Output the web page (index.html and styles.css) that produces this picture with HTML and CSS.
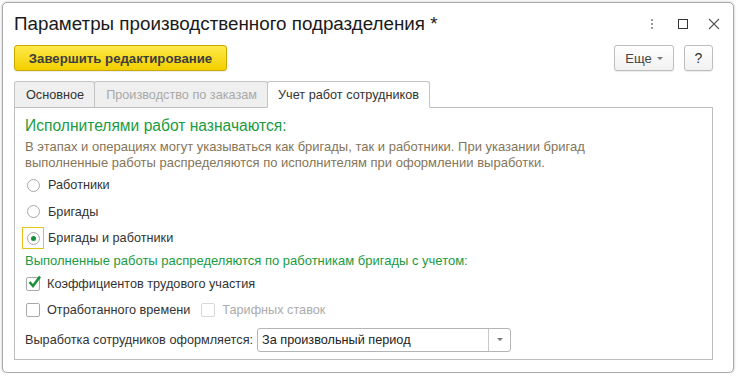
FILE: index.html
```html
<!DOCTYPE html>
<html lang="ru">
<head>
<meta charset="utf-8">
<title>Параметры производственного подразделения</title>
<link rel="stylesheet" href="styles.css">
</head>
<body>
<div class="window">
  <div class="titlebar">
    <div class="title">Параметры производственного подразделения *</div>
    <div class="controls">
      <svg class="ctl" width="20" height="20" viewBox="0 0 20 20"><g fill="#9a9a9a"><rect x="9" y="5" width="2" height="2"/><rect x="9" y="9" width="2" height="2"/><rect x="9" y="13" width="2" height="2"/></g></svg>
      <svg class="ctl" width="20" height="20" viewBox="0 0 20 20"><rect x="5.5" y="5.5" width="9" height="9" fill="none" stroke="#333" stroke-width="1"/></svg>
      <svg class="ctl" width="20" height="20" viewBox="0 0 20 20"><path d="M5 5L15 15M15 5L5 15" stroke="#555" stroke-width="1.1" fill="none"/></svg>
    </div>
  </div>
  <div class="toolbar">
    <button class="btn primary">Завершить редактирование</button>
    <div class="spacer"></div>
    <button class="btn more">Еще <span class="caret"></span></button>
    <button class="btn help">?</button>
  </div>
  <div class="tabs">
    <div class="tab">Основное</div>
    <div class="tab disabled">Производство по заказам</div>
    <div class="tab active">Учет работ сотрудников</div>
  </div>
  <div class="panel">
    <div class="heading">Исполнителями работ назначаются:</div>
    <div class="desc">В этапах и операциях могут указываться как бригады, так и работники. При указании бригад<br>выполненные работы распределяются по исполнителям при оформлении выработки.</div>
    <div class="radios">
      <div class="row"><span class="focus"><span class="radio"></span></span><span class="label">Работники</span></div>
      <div class="row"><span class="focus"><span class="radio"></span></span><span class="label">Бригады</span></div>
      <div class="row"><span class="focus on"><span class="radio checked"></span></span><span class="label">Бригады и работники</span></div>
    </div>
    <div class="subheading">Выполненные работы распределяются по работникам бригады с учетом:</div>
    <div class="checks">
      <div class="row"><span class="check checked"><svg width="15" height="15" viewBox="0 0 15 15"><path d="M2.5 7L6 11L13 1.5" stroke="#1a9139" stroke-width="2.6" fill="none"/></svg></span><span class="label">Коэффициентов трудового участия</span></div>
      <div class="row"><span class="check"></span><span class="label">Отработанного времени</span><span class="check disabled"></span><span class="label muted">Тарифных ставок</span></div>
    </div>
    <div class="field-row">
      <span class="field-label">Выработка сотрудников оформляется:</span>
      <div class="select"><span class="value">За произвольный период</span><span class="dd"><span class="caret"></span></span></div>
    </div>
  </div>
</div>
</body>
</html>
```
FILE: styles.css
```css
* { box-sizing: border-box; }
html, body { margin: 0; padding: 0; background: #ffffff; }
body {
  font-family: "Liberation Sans", Arial, sans-serif;
  font-size: 12.7px;
  color: #333;
  padding: 2px 0 0 2px;
}
.window {
  width: 732px;
  height: 371px;
  border: 1px solid #a9a9a9;
  border-radius: 5px;
  box-shadow: 0 0 3px rgba(0,0,0,0.25);
  background: #fff;
  padding: 0 20px 0 11px;
  display: flex;
  flex-direction: column;
}
.titlebar {
  display: flex;
  align-items: center;
  height: 39px;
  padding-top: 2px;
}
.title {
  font-size: 18.8px;
  color: #1a1a1a;
  flex: 1;
}
.controls {
  display: flex;
  gap: 11px;
  margin-right: -11px;
}
.ctl { display: block; }
.toolbar {
  display: flex;
  align-items: center;
  height: 26px;
  margin-top: 3px;
}
.spacer { flex: 1; }
.btn {
  font-family: inherit;
  height: 26px;
  border-radius: 3px;
  border: 1px solid #bdbdbd;
  background: linear-gradient(#ffffff, #f1f1f1);
  color: #444;
  font-size: 13px;
  padding: 0 10px;
  display: flex;
  align-items: center;
  box-shadow: 0 1px 1px rgba(0,0,0,0.08);
}
.btn.primary {
  width: 213px;
  justify-content: center;
  font-weight: bold;
  color: #3d3d3d;
  border-color: #c9a800;
  background: linear-gradient(#ffe94a, #f3cf00);
  font-size: 13.2px;
}
.btn.more { width: 60px; justify-content: center; gap: 5px; padding: 0; }
.btn.help { width: 29px; margin-left: 10px; justify-content: center; padding: 0; font-size: 14px; color: #333; }
.caret {
  display: inline-block;
  width: 0; height: 0;
  border-left: 3px solid transparent;
  border-right: 3px solid transparent;
  border-top: 3px solid #777;
}
.tabs {
  display: flex;
  margin-top: 10px;
  height: 27px;
  align-items: flex-end;
  position: relative;
  z-index: 1;
  margin-bottom: -1px;
}
.tab {
  height: 27px;
  padding: 0 10px 0 11px;
  display: flex;
  align-items: center;
  background: #efefef;
  border: 1px solid #c4c4c4;
  border-bottom: 1px solid #bdbdbd;
  border-radius: 3px 3px 0 0;
  color: #333;
  margin-right: -1px;
}
.tab.disabled { color: #a9a9a9; }
.tab.active {
  background: #fff;
  border-bottom-color: #fff;
  height: 27px;
  padding: 0 10px 0 10px;
  margin-top: -1px;
}
.panel {
  border: 1px solid #bdbdbd;
  height: 253px;
  padding: 8px 10px 0 10px;
}
.heading {
  color: #1a9b3f;
  font-size: 15.6px;
  line-height: 20px;
}
.desc {
  color: #857559;
  font-size: 13px;
  line-height: 16px;
  margin-top: 3px;
}
.radios { margin-top: 1px; }
.row {
  display: flex;
  align-items: center;
  height: 26.5px;
}
.focus {
  width: 22px; height: 22px;
  display: flex; align-items: center; justify-content: center;
  border: 1px solid transparent;
  margin-left: -3px;
}
.focus.on { border-color: #e7c31a; }
.radio {
  width: 13px; height: 13px;
  border-radius: 50%;
  border: 1px solid #a9a9a9;
  background: #fff;
  display: flex; align-items: center; justify-content: center;
}
.radio.checked::after {
  content: "";
  width: 5px; height: 5px;
  border-radius: 50%;
  background: #14923a;
}
.label { margin-left: 4px; color: #333; }
.label.muted { color: #ababab; }
.subheading {
  color: #1a9b3f;
  font-size: 13px;
  line-height: 18px;
  margin-top: 0;
}
.checks { margin-top: 1px; }
.checks .row { height: 26px; }
.check {
  width: 14px; height: 14px;
  border: 1px solid #a9a9a9;
  border-radius: 2px;
  margin-left: 1px;
  display: flex; align-items: center; justify-content: center;
  background: #fff;
}
.check svg { display: block; margin-top: -3px; margin-left: 2px; flex: none; }
.check.disabled { border-color: #d8d8d8; margin-left: 11px; }
.checks .label { margin-left: 7px; }
.field-row {
  display: flex;
  align-items: center;
  margin-top: 5px;
}
.field-label { color: #333; }
.select {
  margin-left: 4px;
  width: 254px;
  height: 24px;
  border: 1px solid #b5b5b5;
  border-radius: 3px;
  display: flex;
  align-items: center;
  background: #fff;
}
.select .value { flex: 1; padding-left: 4px; color: #222; }
.select .dd {
  width: 22px; height: 22px;
  border-left: 1px solid #c8c8c8;
  display: flex; align-items: center; justify-content: center;
}
```
